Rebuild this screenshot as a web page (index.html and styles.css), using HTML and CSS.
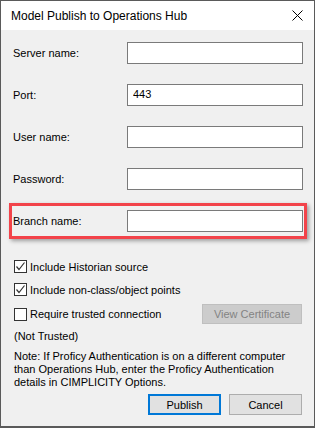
FILE: index.html
```html
<!DOCTYPE html>
<html lang="en">
<head>
    <meta charset="UTF-8">
    <title>Model Publish to Operations Hub</title>
    <link rel="stylesheet" href="styles.css">
</head>
<body>
    <div class="window">
        <div class="titlebar">
            <span class="title">Model Publish to Operations Hub</span>
            <button class="close" aria-label="Close">
                <svg width="11" height="11" viewBox="0 0 11 11">
                    <path d="M0.5 0.5 L10.5 10.5 M10.5 0.5 L0.5 10.5" stroke="#000" stroke-width="1" fill="none"/>
                </svg>
            </button>
        </div>

        <div class="dialog">
            <div class="fields">
                <div class="field">
                    <label>Server name:</label>
                    <input type="text" class="textbox">
                </div>
                <div class="field">
                    <label>Port:</label>
                    <input type="text" class="textbox" value="443">
                </div>
                <div class="field">
                    <label>User name:</label>
                    <input type="text" class="textbox">
                </div>
                <div class="field">
                    <label>Password:</label>
                    <input type="password" class="textbox">
                </div>
                <div class="highlight">
                    <div class="field">
                        <label>Branch name:</label>
                        <input type="text" class="textbox">
                    </div>
                </div>
            </div>

            <div class="options">
                <div class="option">
                    <span class="checkbox checked">
                        <svg width="11" height="11" viewBox="0 0 11 11">
                            <path d="M1.5 5.5 L4 8.5 L9.5 1.5" stroke="#333" stroke-width="1.2" fill="none"/>
                        </svg>
                    </span>
                    <span>Include Historian source</span>
                </div>
                <div class="option">
                    <span class="checkbox checked">
                        <svg width="11" height="11" viewBox="0 0 11 11">
                            <path d="M1.5 5.5 L4 8.5 L9.5 1.5" stroke="#333" stroke-width="1.2" fill="none"/>
                        </svg>
                    </span>
                    <span>Include non-class/object points</span>
                </div>
                <div class="option option-row">
                    <span class="checkbox"></span>
                    <span>Require trusted connection</span>
                    <button class="btn btn-disabled" disabled>View Certificate</button>
                </div>
            </div>

            <div class="status">(Not Trusted)</div>

            <p class="note">Note: If Proficy Authentication is on a different computer than Operations Hub, enter the Proficy Authentication details in CIMPLICITY Options.</p>

            <div class="actions">
                <button class="btn btn-default">Publish</button>
                <button class="btn">Cancel</button>
            </div>
        </div>
    </div>
</body>
</html>
```

FILE: styles.css
```css
* {
    margin: 0;
    padding: 0;
    box-sizing: border-box;
}

body {
    font-family: "Liberation Sans", Arial, sans-serif;
    font-size: 11px;
    color: #000;
    background: #fff;
}

.window {
    width: 315px;
    height: 428px;
    border: 1px solid #5a5a5a;
    border-bottom-width: 2px;
    background: #f0f0f0;
    display: flex;
    flex-direction: column;
}

.titlebar {
    height: 29px;
    background: #fff;
    display: flex;
    align-items: center;
    justify-content: space-between;
    padding: 0 10px 0 10px;
}

.title {
    font-size: 12px;
}

.close {
    background: none;
    border: none;
    width: 11px;
    height: 11px;
    display: flex;
    margin-right: 1px;
}

.dialog {
    flex: 1;
    padding: 12px 11px 0 12px;
    display: flex;
    flex-direction: column;
}

.fields {
    display: flex;
    flex-direction: column;
    gap: 20px;
}

.field {
    display: grid;
    grid-template-columns: 114px 176px;
    align-items: center;
    height: 22px;
}

.textbox {
    height: 22px;
    border: 1px solid #7a7a7a;
    background: #fff;
    font-family: inherit;
    font-size: 11px;
    padding: 0 5px 2px;
    outline: none;
}

.highlight {
    margin: -7px -4px;
    padding: 4px 1px;
    border: 3px solid #f2434a;
    box-shadow: 2px 2px 4px rgba(0, 0, 0, 0.35);
}

.options {
    margin-top: 28px;
    display: flex;
    flex-direction: column;
    gap: 10px;
}

.option {
    display: flex;
    align-items: center;
    gap: 3px;
    height: 13px;
    padding-left: 1px;
}

.option-row {
    height: 20px;
    margin-top: -2px;
}

.checkbox {
    width: 13px;
    height: 13px;
    border: 1px solid #333;
    background: #fff;
    display: flex;
    align-items: center;
    justify-content: center;
}

.btn {
    width: 73px;
    height: 21px;
    border: 1px solid #adadad;
    background: #e1e1e1;
    font-family: inherit;
    font-size: 11px;
    color: #000;
}

.btn-default {
    border: 2px solid #0078d7;
}

.btn-disabled {
    width: 100px;
    height: 20px;
    margin-left: auto;
    margin-right: 1px;
    background: #cccccc;
    border-color: #bfbfbf;
    color: #838383;
}

.status {
    margin-top: 6px;
    padding-left: 1px;
}

.note {
    margin-top: 8px;
    padding-left: 1px;
    line-height: 13px;
    padding-right: 6px;
}

.actions {
    margin-top: 5px;
    display: flex;
    justify-content: flex-end;
    gap: 8px;
    padding-right: 1px;
}
```
